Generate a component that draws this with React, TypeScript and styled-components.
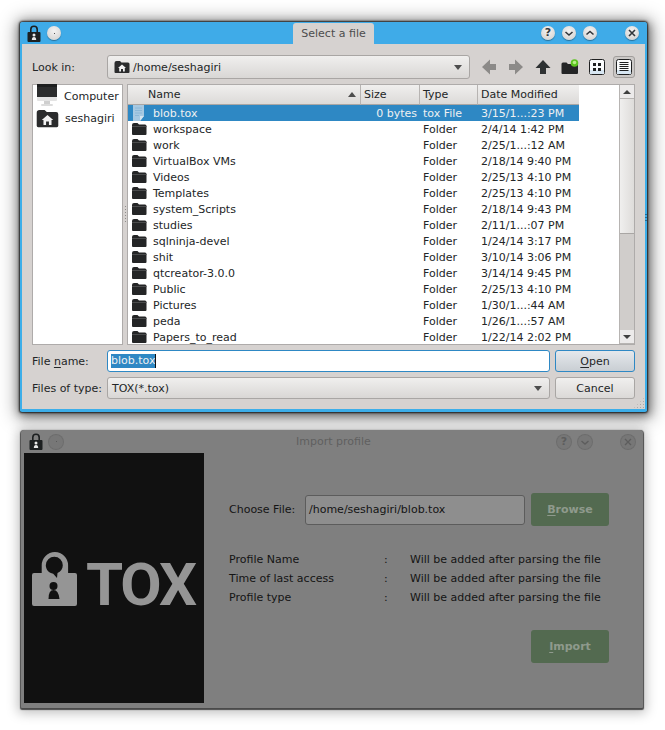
import React from "react";
import styled, { createGlobalStyle } from "styled-components";

const GlobalStyle = createGlobalStyle`
  html, body { margin: 0; padding: 0; background: #ffffff; }
  body { font-family: "DejaVu Sans", sans-serif; font-size: 11px; color: #232627; }
`;

const FILES = [
  ["workspace", "2/4/14 1:42 PM"],
  ["work", "2/25/1...:12 AM"],
  ["VirtualBox VMs", "2/18/14 9:40 PM"],
  ["Videos", "2/25/13 4:10 PM"],
  ["Templates", "2/25/13 4:10 PM"],
  ["system_Scripts", "2/18/14 9:43 PM"],
  ["studies", "2/11/1...:07 PM"],
  ["sqlninja-devel", "1/24/14 3:17 PM"],
  ["shit", "3/10/14 3:06 PM"],
  ["qtcreator-3.0.0", "3/14/14 9:45 PM"],
  ["Public", "2/25/13 4:10 PM"],
  ["Pictures", "1/30/1...:44 AM"],
  ["peda", "1/26/1...:57 AM"],
  ["Papers_to_read", "1/22/14 2:02 PM"],
];

const INFO = ["Profile Name", "Time of last access", "Profile type"];

export default function App() {
  return (
    <Page>
      <GlobalStyle />
      <FileWindow>
        <BlueBar>
          <BarGroup>
            <LockIcon size={17} />
            <RoundButton><Dot /></RoundButton>
          </BarGroup>
          <Tab>Select a file</Tab>
          <BarRight>
            <RoundButton><Glyph>?</Glyph></RoundButton>
            <RoundButton><Chevron d="M3.5 6 L7 9 L10.5 6" /></RoundButton>
            <RoundButton><Chevron d="M3.5 8.5 L7 5.5 L10.5 8.5" /></RoundButton>
            <CloseSlot>
              <RoundButton><Chevron d="M4 4 L10 10 M10 4 L4 10" /></RoundButton>
            </CloseSlot>
          </BarRight>
        </BlueBar>

        <DialogBody>
          <TopRow>
            <FieldLabel>Look in:</FieldLabel>
            <PathCombo>
              <HomeFolderIcon size={15} />
              <span>/home/seshagiri</span>
              <ComboArrow />
            </PathCombo>
            <Tools>
              <ToolSlot><ArrowIcon dir="left" color="#8c8a88" /></ToolSlot>
              <ToolSlot><ArrowIcon dir="right" color="#8c8a88" /></ToolSlot>
              <ToolSlot><ArrowIcon dir="up" color="#2f3233" /></ToolSlot>
              <ToolSlot><NewFolderIcon /></ToolSlot>
              <ToolSlot><ViewIcon kind="grid" /></ToolSlot>
              <ActiveTool><ViewIcon kind="list" /></ActiveTool>
            </Tools>
          </TopRow>

          <Browser>
            <Places>
              <Place>
                <ComputerIcon />
                <span>Computer</span>
              </Place>
              <Place>
                <HomeFolderIcon size={22} />
                <span>seshagiri</span>
              </Place>
            </Places>
            <Splitter />
            <ListBox>
              <ListMain>
                <HeaderRow>
                  <HeadName>
                    Name
                    <SortArrow />
                  </HeadName>
                  <HeadCell>Size</HeadCell>
                  <HeadCell>Type</HeadCell>
                  <HeadCell>Date Modified</HeadCell>
                </HeaderRow>
                <Row $selected>
                  <NameCell>
                    <FileIcon />
                    <span>blob.tox</span>
                  </NameCell>
                  <SizeCell>0 bytes</SizeCell>
                  <TypeCell>tox File</TypeCell>
                  <DateCell>3/15/1...:23 PM</DateCell>
                </Row>
                {FILES.map(([name, date]) => (
                  <Row key={name}>
                    <NameCell>
                      <FolderIcon />
                      <span>{name}</span>
                    </NameCell>
                    <SizeCell />
                    <TypeCell>Folder</TypeCell>
                    <DateCell>{date}</DateCell>
                  </Row>
                ))}
              </ListMain>
              <ScrollBar>
                <ScrollBtn><ScrollUp /></ScrollBtn>
                <ScrollHandle />
                <ScrollTrough />
                <ScrollBtn><ScrollDown /></ScrollBtn>
              </ScrollBar>
            </ListBox>
          </Browser>

          <FormRow>
            <FieldLabel>File <u>n</u>ame:</FieldLabel>
            <NameInput>
              <Selected>blob.tox</Selected>
              <Caret />
            </NameInput>
            <PrimaryButton><u>O</u>pen</PrimaryButton>
          </FormRow>
          <TypeRow>
            <FieldLabel>Files of type:</FieldLabel>
            <TypeCombo>
              <span>TOX(*.tox)</span>
              <ComboArrow />
            </TypeCombo>
            <PlainButton>Cancel</PlainButton>
          </TypeRow>
          <Grip />
          <EdgeDots />
        </DialogBody>
      </FileWindow>

      <ImportWindow>
        <GreyBar>
          <BarGroup>
            <LockIcon size={17} />
            <DimButton><Dot /></DimButton>
          </BarGroup>
          <GreyTitle>Import profile</GreyTitle>
          <BarRight>
            <DimButton><DimGlyph>?</DimGlyph></DimButton>
            <DimButton><DimChevron d="M3.5 6 L7 9 L10.5 6" /></DimButton>
            <DimCloseSlot>
              <DimButton><DimChevron d="M4 4 L10 10 M10 4 L4 10" /></DimButton>
            </DimCloseSlot>
          </BarRight>
        </GreyBar>
        <ImportBody>
          <LogoPanel>
            <LogoLockSlot><LogoLock /></LogoLockSlot>
            <LogoText>TOX</LogoText>
          </LogoPanel>
          <ImportForm>
            <ChooseRow>
              <ChooseLabel>Choose File:</ChooseLabel>
              <PathInput>/home/seshagiri/blob.tox</PathInput>
              <GreenButton><u>B</u>rowse</GreenButton>
            </ChooseRow>
            <InfoList>
              {INFO.map((label) => (
                <InfoRow key={label}>
                  <span>{label}</span>
                  <span>:</span>
                  <span>Will be added after parsing the file</span>
                </InfoRow>
              ))}
            </InfoList>
            <ImportRow>
              <GreenButton><u>I</u>mport</GreenButton>
            </ImportRow>
          </ImportForm>
        </ImportBody>
      </ImportWindow>
    </Page>
  );
}

/* ---------------- icons ---------------- */
function LockIcon({ size }: { size: number }) {
  return (
    <svg width={size - 3} height={size} viewBox="0 0 14 17">
      <path
        fill="#1d2021"
        fillRule="evenodd"
        d="M3 7V4.500a4 4 0 0 1 8 0V7h1.500q1 0 1 1v8q0 1-1 1h-11q-1 0-1-1V8q0-1 1-1zM4.600 7h4.800V4.500a2.400 2.400 0 0 0-4.800 0z"
      />
      <circle cx="7" cy="10" r="1.5" fill="#e8e8e8" />
      <path d="M4.800 15q0-3 2.200-3t2.200 3z" fill="#e8e8e8" />
    </svg>
  );
}

function Dot() {
  return <DotMark />;
}

function Chevron({ d }: { d: string }) {
  return (
    <svg width="14" height="14" viewBox="0 0 14 14">
      <path d={d} fill="none" stroke="#31363b" strokeWidth="1.6" />
    </svg>
  );
}

function DimChevron({ d }: { d: string }) {
  return (
    <svg width="14" height="14" viewBox="0 0 14 14">
      <path d={d} fill="none" stroke="#5a5a5a" strokeWidth="1.4" />
    </svg>
  );
}

function FolderIcon() {
  return (
    <svg width="16" height="14" viewBox="0 0 16 14">
      <path
        fill="#242526"
        d="M1 3q0-2 2-2h3.500l1.500 1.500h6q1.500 0 1.500 1.500v8q0 1-1 1H2q-1 0-1-1z"
      />
      <rect x="1" y="4" width="14.500" height="1" fill="#4a4b4c" />
    </svg>
  );
}

function HomeFolderIcon({ size }: { size: number }) {
  return (
    <svg width={size + 1} height={size - 1} viewBox="0 0 16 14">
      <path
        fill="#2b2c2d"
        d="M0.500 3q0-2 2-2h3.500l1.500 1.500h6.500q1.500 0 1.500 1.500v8q0 1-1 1H1.500q-1 0-1-1z"
      />
      <path fill="#f2f2f2" d="M8 4.500l4 3.500h-1.200v3.500H9v-2.400H7v2.400H5.200V8H4z" />
    </svg>
  );
}

function ComputerIcon() {
  return (
    <svg width="22" height="24" viewBox="0 0 22 24">
      <rect x="1" y="0" width="20" height="3" fill="#1e1f20" />
      <rect x="1" y="3" width="20" height="10" fill="#2c2d2e" />
      <rect x="1" y="13" width="20" height="4" rx="1" fill="#e4e4e4" />
      <rect x="8" y="17" width="6" height="3" fill="#cfcfcf" />
      <rect x="5" y="20" width="12" height="2" rx="1" fill="#dcdcdc" />
    </svg>
  );
}

function FileIcon() {
  return (
    <svg width="16" height="16" viewBox="0 0 16 16">
      <path d="M2 0h11v11l-4 5H2z" fill="#a7c9e2" />
      <path d="M9 16v-5h4z" fill="#d5e5f0" />
      <path d="M4 3h7M4 5.500h7M4 8h7M4 10.500h4" stroke="#8cb8d8" strokeWidth="1" />
    </svg>
  );
}

function ArrowIcon({ dir, color }: { dir: "left" | "right" | "up"; color: string }) {
  const angle = dir === "up" ? 0 : dir === "left" ? -90 : 90;
  return (
    <svg width="16" height="16" viewBox="0 0 16 16">
      <path
        transform={`rotate(${angle} 8 8)`}
        d="M8 1l7.500 8H11v6H5V9H.5z"
        fill={color}
      />
    </svg>
  );
}

function NewFolderIcon() {
  return (
    <svg width="18" height="16" viewBox="0 0 18 16">
      <path
        fill="#242526"
        d="M0.500 5q0-1.500 1.500-1.500h3.500L7 5h8.500q1.500 0 1.500 1.500V14q0 1-1 1H1.500q-1 0-1-1z"
      />
      <circle cx="13.500" cy="4" r="3.800" fill="#5cc41f" />
      <circle cx="13.500" cy="3.500" r="1.800" fill="#b8ee88" />
    </svg>
  );
}

function ViewIcon({ kind }: { kind: "grid" | "list" }) {
  return (
    <svg width="16" height="16" viewBox="0 0 16 16">
      <rect x="0.500" y="0.500" width="15" height="15" rx="2" fill="#fbfcfd" stroke="#1f2021" />
      <rect x="1" y="11" width="14" height="4" fill="#d7e6f2" />
      {kind === "grid" ? (
        <path
          fill="#1f2021"
          d="M4 4h3v3H4zM9 4h3v3H9zM4 9h3v3H4zM9 9h3v3H9z"
        />
      ) : (
        <path
          stroke="#1f2021"
          strokeWidth="1"
          d="M3.500 3.500h9M3.500 5.500h9M3.500 7.500h9M3.500 9.500h9M3.500 11.500h9"
        />
      )}
    </svg>
  );
}

function LogoLock() {
  return (
    <svg width="45" height="54" viewBox="0 0 45 54" display="block">
      <path
        fill="#959595"
        fillRule="evenodd"
        d="M9.700 21V13.300a13.200 13.200 0 0 1 26.400 0V21h6.900q2 0 2 2v29q0 2-2 2H2q-2 0-2-2V23q0-2 2-2zM13.800 13.300c0 4.400 3.300 7.800 7.400 8.400l3.800 4.300.5-5c3.200-1.300 5.300-4.200 5.300-7.700a8.500 8.500 0 0 0-17 0z"
      />
      <circle cx="21.500" cy="34" r="4" fill="#111111" />
      <path d="M16.500 47q0-9 5-9t6 9z" fill="#111111" />
    </svg>
  );
}

/* ---------------- styled ---------------- */
const Page = styled.div`
  width: 665px;
  height: 730px;
  overflow: hidden;
  padding: 22px 0 0 20px;
  box-sizing: border-box;
`;

const FileWindow = styled.div`
  width: 627px;
  height: 390px;
  display: flex;
  flex-direction: column;
  box-sizing: border-box;
  background: #d6d2d0;
  border: 1px solid #3daee9;
  border-width: 0 2px 3px 2px;
  border-radius: 3px 3px 2px 2px;
  box-shadow: 0 0 2px 1px rgba(0, 0, 0, 0.8), 1px 2px 8px 2px rgba(0, 0, 0, 0.4),
    1px 2px 18px 5px rgba(0, 0, 0, 0.35);
`;

const BlueBar = styled.div`
  height: 22px;
  margin: 0 -2px;
  padding: 0 8px 0 7px;
  flex: none;
  display: flex;
  align-items: center;
  background: #3fabe8;
  border-radius: 3px 3px 0 0;
`;

const BarGroup = styled.div`
  display: flex;
  align-items: center;
  gap: 6px;
  width: 266px;
`;

const Tab = styled.div`
  align-self: flex-end;
  width: 81px;
  height: 21px;
  box-sizing: border-box;
  display: flex;
  align-items: center;
  justify-content: center;
  background: #d6d2d0;
  border-radius: 3px 3px 0 0;
  color: #4d4d4d;
`;

const BarRight = styled.div`
  margin-left: auto;
  display: flex;
  align-items: center;
  gap: 7px;
`;

const RoundButton = styled.div`
  width: 14px;
  height: 14px;
  border-radius: 50%;
  display: flex;
  align-items: center;
  justify-content: center;
  background: radial-gradient(circle at 50% 35%, #f3f3f3, #cfcdcb);
  box-shadow: 0 1px 1px rgba(0, 0, 0, 0.35);
`;

const DimButton = styled(RoundButton)`
  background: #777777;
  box-shadow: 0 0 0 1px #6c6c6c;
  opacity: 0.9;
`;

const Glyph = styled.span`
  font-size: 11px;
  font-weight: bold;
  color: #31363b;
  line-height: 14px;
`;

const DimGlyph = styled(Glyph)`
  color: #5a5a5a;
`;

const DotMark = styled.span`
  width: 1px;
  height: 1px;
  background: #555555;
`;

const CloseSlot = styled.div`
  margin-left: 21px;
`;

const DimCloseSlot = styled(CloseSlot)`
  margin-left: 22px;
`;

const DialogBody = styled.div`
  position: relative;
  flex: 1;
  display: flex;
  flex-direction: column;
  padding: 11px 10px 0 10px;
  min-height: 0;
`;

const TopRow = styled.div`
  display: flex;
  align-items: center;
  height: 24px;
`;

const FieldLabel = styled.div`
  width: 75px;
  flex: none;
  u { text-underline-offset: 2px; }
`;

const comboBase = `
  box-sizing: border-box;
  display: flex;
  align-items: center;
  border: 1px solid #a9a6a4;
  border-radius: 3px;
  background: linear-gradient(#f0efee, #d9d7d5);
`;

const PathCombo = styled.div`
  ${comboBase}
  width: 366px;
  height: 24px;
  padding: 0 6px 0 6px;
  gap: 3px;
`;

const TypeCombo = styled.div`
  ${comboBase}
  width: 443px;
  height: 22px;
  padding: 0 6px 0 4px;
`;

const ComboArrow = styled.span`
  margin-left: auto;
  margin-right: 1px;
  width: 0;
  height: 0;
  border-left: 4px solid transparent;
  border-right: 4px solid transparent;
  border-top: 5px solid #4d4d4d;
`;

const Tools = styled.div`
  display: flex;
  align-items: center;
  margin-left: 8px;
  gap: 5px;
`;

const ToolSlot = styled.div`
  width: 22px;
  height: 22px;
  display: flex;
  align-items: center;
  justify-content: center;
`;

const ActiveTool = styled(ToolSlot)`
  box-sizing: border-box;
  border: 1px solid #a19e9c;
  border-radius: 3px;
  background: #cbc8c6;
`;

const Browser = styled.div`
  display: flex;
  height: 261px;
  margin-top: 5px;
`;

const Places = styled.div`
  width: 91px;
  box-sizing: border-box;
  flex: none;
  background: #ffffff;
  border: 1px solid #aeabaa;
  padding: 0 0 0 3px;
`;

const Place = styled.div`
  height: 22px;
  display: flex;
  align-items: center;
  gap: 6px;
  color: #232627;
`;

const Splitter = styled.div`
  width: 4px;
  flex: none;
  display: flex;
  align-items: center;
  justify-content: center;
  &::after {
    content: "";
    width: 1px;
    height: 18px;
    background: repeating-linear-gradient(#8f8d8b 0 1px, transparent 1px 3px);
  }
`;

const ListBox = styled.div`
  flex: 1;
  display: flex;
  box-sizing: border-box;
  border: 1px solid #aeabaa;
  background: #ffffff;
  overflow: hidden;
  min-width: 0;
`;

const ListMain = styled.div`
  flex: 1;
  min-width: 0;
  overflow: hidden;
`;

const HeaderRow = styled.div`
  display: grid;
  grid-template-columns: 233px 59px 58px 102px;
  height: 20px;
  background: #d6d2d0;
`;

const HeadCell = styled.div`
  display: flex;
  align-items: center;
  box-sizing: border-box;
  padding-left: 3px;
  background: linear-gradient(#f0efee, #dcdad8);
  border-right: 1px solid #b7b4b2;
  border-bottom: 1px solid #a9a6a4;
`;

const HeadName = styled(HeadCell)`
  padding-left: 20px;
  position: relative;
`;

const SortArrow = styled.span`
  position: absolute;
  right: 4px;
  top: 7px;
  width: 0;
  height: 0;
  border-left: 4px solid transparent;
  border-right: 4px solid transparent;
  border-bottom: 5px solid #4d4d4d;
`;

const Row = styled.div<{ $selected?: boolean }>`
  display: grid;
  grid-template-columns: 233px 59px 58px 102px;
  width: 452px;
  height: 16px;
  align-items: center;
  background: ${(p) => (p.$selected ? "#2e88c4" : "#ffffff")};
  color: ${(p) => (p.$selected ? "#eff0f1" : "#232627")};
  white-space: nowrap;
`;

const NameCell = styled.div`
  display: flex;
  align-items: center;
  gap: 6px;
  padding-left: 3px;
  height: 16px;
`;

const SizeCell = styled.div`
  text-align: right;
  padding-right: 3px;
`;

const TypeCell = styled.div`
  padding-left: 3px;
`;

const DateCell = styled.div`
  padding-left: 3px;
`;

const ScrollBar = styled.div`
  width: 14px;
  flex: none;
  margin-left: 40px;
  display: flex;
  flex-direction: column;
  background: #d6d2d0;
  border-left: 1px solid #b7b4b2;
`;

const ScrollBtn = styled.div`
  height: 14px;
  flex: none;
  box-sizing: border-box;
  display: flex;
  align-items: center;
  justify-content: center;
  background: #eceaea;
  border-bottom: 1px solid #b7b4b2;
`;

const ScrollUp = styled.span`
  width: 0;
  height: 0;
  border-left: 4px solid transparent;
  border-right: 4px solid transparent;
  border-bottom: 4px solid #3f3f3f;
`;

const ScrollDown = styled.span`
  width: 0;
  height: 0;
  border-left: 4px solid transparent;
  border-right: 4px solid transparent;
  border-top: 4px solid #3f3f3f;
`;

const ScrollHandle = styled.div`
  height: 135px;
  flex: none;
  box-sizing: border-box;
  background: linear-gradient(90deg, #f0efee, #dedcda);
  border-bottom: 1px solid #a9a6a4;
`;

const ScrollTrough = styled.div`
  flex: 1;
  background: #d0cdcb;
`;

const FormRow = styled.div`
  display: flex;
  align-items: center;
  height: 22px;
  margin-top: 5px;
`;

const TypeRow = styled(FormRow)`
  margin-top: 5px;
`;

const NameInput = styled.div`
  width: 443px;
  height: 22px;
  box-sizing: border-box;
  display: flex;
  align-items: center;
  padding-left: 3px;
  background: #ffffff;
  border: 1px solid #2e88c4;
  border-radius: 3px;
`;

const Selected = styled.span`
  background: #2e88c4;
  color: #eff0f1;
  line-height: 14px;
`;

const Caret = styled.span`
  width: 1px;
  height: 14px;
  background: #111111;
`;

const buttonBase = `
  width: 80px;
  height: 22px;
  margin-left: 5px;
  box-sizing: border-box;
  display: flex;
  align-items: center;
  justify-content: center;
  white-space: pre;
  border-radius: 3px;
  u { text-underline-offset: 2px; }
`;

const PrimaryButton = styled.div`
  ${buttonBase}
  border: 1px solid #2e88c4;
  background: linear-gradient(#e4e8ec, #c9ced3);
`;

const PlainButton = styled.div`
  ${buttonBase}
  border: 1px solid #a9a6a4;
  background: linear-gradient(#f0efee, #dbd9d7);
`;

const Grip = styled.div`
  position: absolute;
  right: 0;
  bottom: 0;
  width: 12px;
  height: 12px;
  background: radial-gradient(circle, #aaa7a5 0.6px, transparent 0.8px) 0 0 / 3px 3px;
  clip-path: polygon(100% 0, 100% 100%, 0 100%);
`;

const EdgeDots = styled.div`
  position: absolute;
  right: -2px;
  top: 170px;
  width: 2px;
  height: 8px;
  background: repeating-linear-gradient(#1f6f9e 0 1px, transparent 1px 3px);
`;

const ImportWindow = styled.div`
  width: 622px;
  height: 278px;
  margin: 18px 0 0 1px;
  display: flex;
  flex-direction: column;
  background: #7f7f7f;
  border-radius: 3px 3px 1px 1px;
  box-shadow: 0 1px 1px 1px rgba(60, 60, 60, 0.9), 0 2px 12px 3px rgba(0, 0, 0, 0.25);
`;

const GreyBar = styled.div`
  height: 23px;
  flex: none;
  padding: 0 8px 0 8px;
  display: flex;
  align-items: center;
  position: relative;
`;

const GreyTitle = styled.div`
  position: absolute;
  left: 275px;
  color: #5f5f5f;
`;

const ImportBody = styled.div`
  display: flex;
  flex: 1;
  padding: 0 0 5px 3px;
  min-height: 0;
`;

const LogoPanel = styled.div`
  width: 180px;
  flex: none;
  box-sizing: border-box;
  background: #111111;
  display: flex;
  align-items: center;
  justify-content: flex-start;
  padding: 7px 0 0 8px;
  gap: 9px;
`;

const LogoLockSlot = styled.div`
  margin-bottom: 6px;
`;

const LogoText = styled.span`
  margin-top: 6px;
  font-family: "Roboto", "Liberation Sans", sans-serif;
  font-weight: 700;
  font-size: 60px;
  line-height: 54px;
  letter-spacing: -2px;
  color: #959595;
`;

const ImportForm = styled.div`
  flex: 1;
  padding: 40px 0 0 25px;
  color: #141414;
`;

const ChooseRow = styled.div`
  display: flex;
  align-items: center;
`;

const ChooseLabel = styled.div`
  width: 76px;
  flex: none;
`;

const PathInput = styled.div`
  width: 220px;
  height: 30px;
  box-sizing: border-box;
  display: flex;
  align-items: center;
  padding-left: 3px;
  padding-bottom: 1px;
  background: #8e8e8e;
  border: 1px solid #5c5c5c;
  border-radius: 3px;
`;

const GreenButton = styled.div`
  width: 78px;
  height: 33px;
  flex: none;
  margin-left: 6px;
  display: flex;
  align-items: center;
  justify-content: center;
  white-space: pre;
  background: #536a50;
  border-radius: 3px;
  color: #8f9a8d;
  font-weight: bold;
  u { text-underline-offset: 2px; }
`;

const InfoList = styled.div`
  margin-top: 27px;
  display: flex;
  flex-direction: column;
  gap: 5px;
`;

const InfoRow = styled.div`
  display: grid;
  grid-template-columns: 155px 26px auto;
  height: 14px;
  line-height: 14px;
  white-space: nowrap;
`;

const ImportRow = styled.div`
  display: flex;
  justify-content: flex-end;
  width: 380px;
  margin-top: 25px;
`;
